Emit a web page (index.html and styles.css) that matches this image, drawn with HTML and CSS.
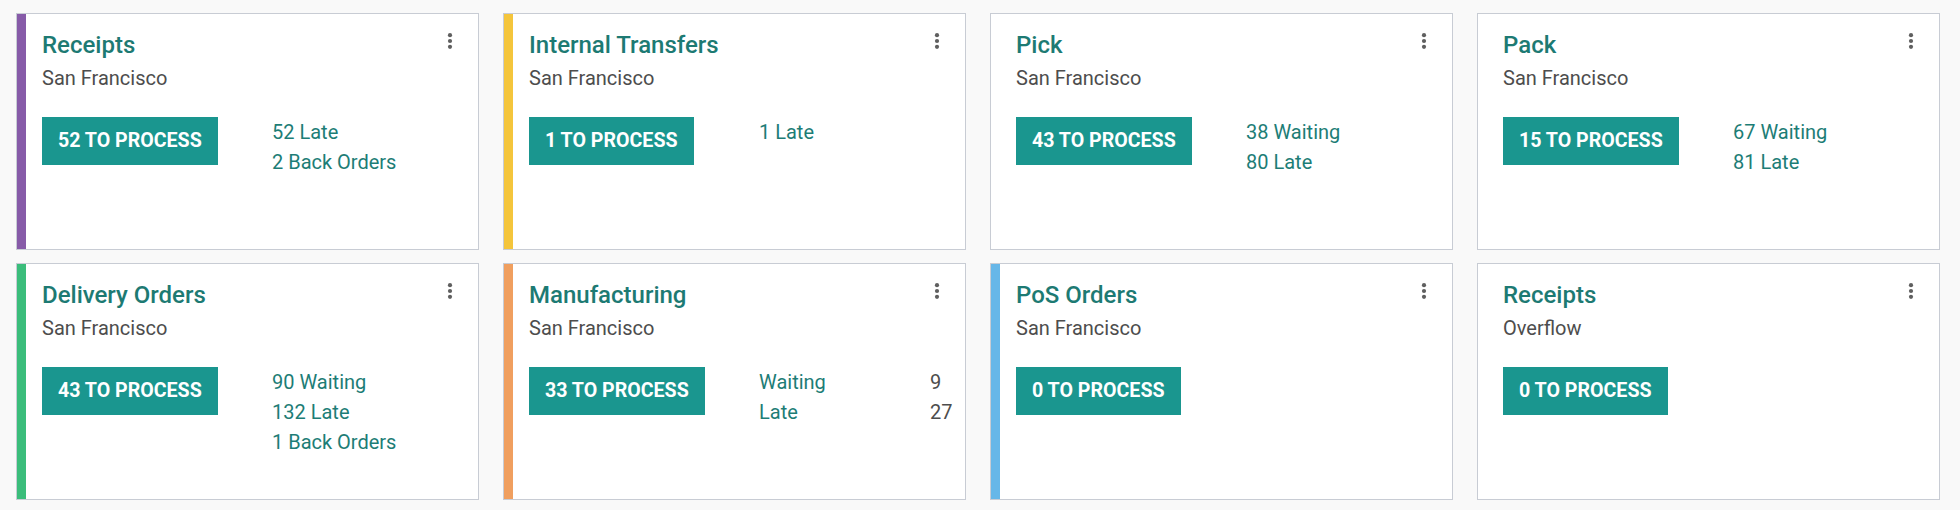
FILE: index.html
```html
<!DOCTYPE html>
<html lang="en">
<head>
<meta charset="utf-8">
<title>Inventory Overview</title>
<link rel="stylesheet" href="styles.css">
</head>
<body>
<div class="board">

  <div class="card bar-purple">
    <div class="head">
      <div class="titles">
        <div class="title">Receipts</div>
        <div class="sub">San Francisco</div>
      </div>
      <svg class="kebab" viewBox="0 0 6 16" width="6" height="16"><circle cx="3" cy="2.2" r="2.1"/><circle cx="3" cy="8" r="2.1"/><circle cx="3" cy="13.8" r="2.1"/></svg>
    </div>
    <div class="body">
      <div><span class="btn">52 TO PROCESS</span></div>
      <div class="links"><div>52 Late</div><div>2 Back Orders</div></div>
    </div>
  </div>

  <div class="card bar-yellow">
    <div class="head">
      <div class="titles">
        <div class="title">Internal Transfers</div>
        <div class="sub">San Francisco</div>
      </div>
      <svg class="kebab" viewBox="0 0 6 16" width="6" height="16"><circle cx="3" cy="2.2" r="2.1"/><circle cx="3" cy="8" r="2.1"/><circle cx="3" cy="13.8" r="2.1"/></svg>
    </div>
    <div class="body">
      <div><span class="btn">1 TO PROCESS</span></div>
      <div class="links"><div>1 Late</div></div>
    </div>
  </div>

  <div class="card">
    <div class="head">
      <div class="titles">
        <div class="title">Pick</div>
        <div class="sub">San Francisco</div>
      </div>
      <svg class="kebab" viewBox="0 0 6 16" width="6" height="16"><circle cx="3" cy="2.2" r="2.1"/><circle cx="3" cy="8" r="2.1"/><circle cx="3" cy="13.8" r="2.1"/></svg>
    </div>
    <div class="body">
      <div><span class="btn">43 TO PROCESS</span></div>
      <div class="links"><div>38 Waiting</div><div>80 Late</div></div>
    </div>
  </div>

  <div class="card">
    <div class="head">
      <div class="titles">
        <div class="title">Pack</div>
        <div class="sub">San Francisco</div>
      </div>
      <svg class="kebab" viewBox="0 0 6 16" width="6" height="16"><circle cx="3" cy="2.2" r="2.1"/><circle cx="3" cy="8" r="2.1"/><circle cx="3" cy="13.8" r="2.1"/></svg>
    </div>
    <div class="body">
      <div><span class="btn">15 TO PROCESS</span></div>
      <div class="links"><div>67 Waiting</div><div>81 Late</div></div>
    </div>
  </div>

  <div class="card bar-green">
    <div class="head">
      <div class="titles">
        <div class="title">Delivery Orders</div>
        <div class="sub">San Francisco</div>
      </div>
      <svg class="kebab" viewBox="0 0 6 16" width="6" height="16"><circle cx="3" cy="2.2" r="2.1"/><circle cx="3" cy="8" r="2.1"/><circle cx="3" cy="13.8" r="2.1"/></svg>
    </div>
    <div class="body">
      <div><span class="btn">43 TO PROCESS</span></div>
      <div class="links"><div>90 Waiting</div><div>132 Late</div><div>1 Back Orders</div></div>
    </div>
  </div>

  <div class="card bar-orange">
    <div class="head">
      <div class="titles">
        <div class="title">Manufacturing</div>
        <div class="sub">San Francisco</div>
      </div>
      <svg class="kebab" viewBox="0 0 6 16" width="6" height="16"><circle cx="3" cy="2.2" r="2.1"/><circle cx="3" cy="8" r="2.1"/><circle cx="3" cy="13.8" r="2.1"/></svg>
    </div>
    <div class="body">
      <div><span class="btn">33 TO PROCESS</span></div>
      <div class="links stats">
        <div>Waiting</div><div class="num">9</div>
        <div>Late</div><div class="num">27</div>
      </div>
    </div>
  </div>

  <div class="card bar-blue">
    <div class="head">
      <div class="titles">
        <div class="title">PoS Orders</div>
        <div class="sub">San Francisco</div>
      </div>
      <svg class="kebab" viewBox="0 0 6 16" width="6" height="16"><circle cx="3" cy="2.2" r="2.1"/><circle cx="3" cy="8" r="2.1"/><circle cx="3" cy="13.8" r="2.1"/></svg>
    </div>
    <div class="body">
      <div><span class="btn">0 TO PROCESS</span></div>
      <div class="links"></div>
    </div>
  </div>

  <div class="card">
    <div class="head">
      <div class="titles">
        <div class="title">Receipts</div>
        <div class="sub">Overflow</div>
      </div>
      <svg class="kebab" viewBox="0 0 6 16" width="6" height="16"><circle cx="3" cy="2.2" r="2.1"/><circle cx="3" cy="8" r="2.1"/><circle cx="3" cy="13.8" r="2.1"/></svg>
    </div>
    <div class="body">
      <div><span class="btn">0 TO PROCESS</span></div>
      <div class="links"></div>
    </div>
  </div>

</div>
</body>
</html>
```

FILE: styles.css
```css
html, body {
  margin: 0;
  padding: 0;
  background: #f9f9f9;
  font-family: Roboto, "Liberation Sans", Arial, sans-serif;
}

.board {
  display: grid;
  grid-template-columns: repeat(4, 463px);
  grid-auto-rows: 237px;
  column-gap: 24px;
  row-gap: 13px;
  padding: 13px 0 0 16px;
}

.card {
  position: relative;
  box-sizing: border-box;
  background: #ffffff;
  border: 1px solid #c8ccd4;
  padding: 13px 25px 0 25px;
}

.card::before {
  content: "";
  position: absolute;
  left: 0;
  top: 0;
  bottom: 0;
  width: 9px;
  background: transparent;
}

.bar-purple::before { background: #875ba8; }
.bar-yellow::before { background: #f4c53c; }
.bar-green::before { background: #3bbd7b; }
.bar-orange::before { background: #f09f5f; }
.bar-blue::before { background: #67b7e8; }

.head {
  display: flex;
  justify-content: space-between;
  align-items: flex-start;
}

.title {
  font-size: 24px;
  line-height: 36px;
  font-weight: 500;
  color: #1d7a73;
}

.sub {
  font-size: 20px;
  line-height: 30px;
  color: #4d4d4d;
}

.kebab {
  margin-top: 6px;
  margin-right: 0;
  fill: #5f5f5f;
  flex: none;
}

.body {
  display: grid;
  grid-template-columns: 230px 1fr;
  margin-top: 24px;
}

.btn {
  display: inline-block;
  background: #1a968f;
  color: #ffffff;
  font-size: 19.6px;
  line-height: 30px;
  font-weight: 700;
  padding: 9px 16px;
}

.links {
  font-size: 20px;
  line-height: 30px;
  color: #1d7d76;
}

.stats {
  display: grid;
  grid-template-columns: 171px auto;
}

.stats .num {
  color: #4d4d4d;
}
```
